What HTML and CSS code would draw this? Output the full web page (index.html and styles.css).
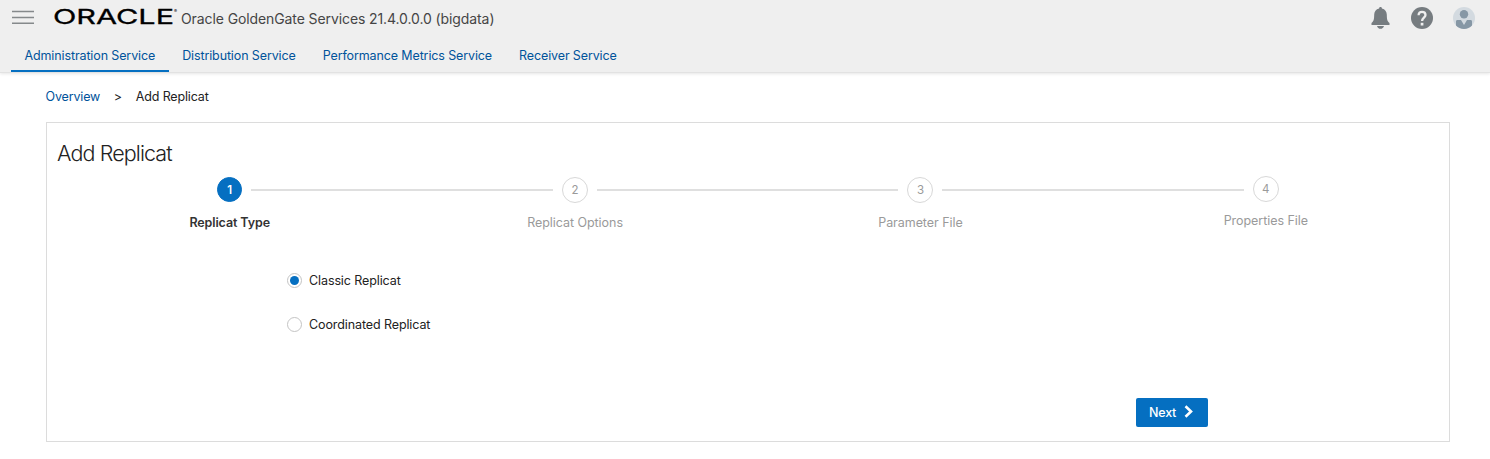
FILE: index.html
```html
<!DOCTYPE html>
<html lang="en">
<head>
<meta charset="utf-8">
<title>Add Replicat</title>
<link rel="stylesheet" href="styles.css">
</head>
<body>
<header class="header">
  <div class="brand-row">
    <svg class="menu" width="22" height="14" viewBox="0 0 22 14"><path d="M0 1.5h22M0 7.5h22M0 13.2h22" stroke="#85898b" stroke-width="1.5"/></svg>
    <svg class="logo" width="124" height="22" viewBox="0 0 124 22" role="img" aria-label="ORACLE">
      <text x="-1" y="17.8" class="wordmark" textLength="121" lengthAdjust="spacingAndGlyphs">ORACLE</text>
      <text x="120" y="7" class="reg">®</text>
    </svg>
    <span class="product">Oracle GoldenGate Services 21.4.0.0.0 (bigdata)</span>
    <div class="tools">
      <svg width="20" height="22" viewBox="0 0 20 22" fill="#767c80"><path d="M9.500 0c.9 0 1.400.6 1.400 1.400C14.100 2 15.700 4.500 15.800 7.500c.1 4.500.3 6.500 2.700 8.600V18H.5v-1.900c2.400-2.100 2.600-4.100 2.700-8.600C3.300 4.500 4.900 2 8.100 1.400 8.100.6 8.600 0 9.500 0zM6 19h7c-.5 1.900-1.800 2.800-3.500 2.800S6.500 20.900 6 19z"/></svg>
      <svg width="22" height="22" viewBox="0 0 22 22"><circle cx="11" cy="11" r="11" fill="#767c80"/><path d="M7.600 8.200C7.600 5.900 9 4.800 11 4.800s3.500 1.200 3.500 3.100c0 2.600-3.400 2.900-3.400 6.100" fill="none" stroke="#efefef" stroke-width="2.300"/><rect x="9.700" y="15.800" width="2.700" height="2.700" fill="#efefef"/></svg>
      <svg width="22" height="22" viewBox="0 0 22 22"><circle cx="11" cy="11" r="11" fill="#d3dae0"/><circle cx="11" cy="7.300" r="4.200" fill="#8697a5"/><path d="M3 14.500c0-1 .6-1.500 1.500-1.500H8l3 5 3-5h3.500c.9 0 1.500.5 1.500 1.500v4A11 11 0 0 1 3 18.500z" fill="#8697a5"/></svg>
    </div>
  </div>
  <nav class="tabs">
    <a class="tab active">Administration Service</a>
    <a class="tab">Distribution Service</a>
    <a class="tab">Performance Metrics Service</a>
    <a class="tab">Receiver Service</a>
  </nav>
</header>
<div class="crumbs"><a>Overview</a><span class="sep">&gt;</span><span>Add Replicat</span></div>
<main class="panel">
  <h1>Add Replicat</h1>
  <div class="train">
    <div class="step current"><div class="track"><i></i><b>1</b><i class="line"></i></div><span>Replicat Type</span></div>
    <div class="step"><div class="track"><i class="line"></i><b>2</b><i class="line"></i></div><span>Replicat Options</span></div>
    <div class="step"><div class="track"><i class="line"></i><b>3</b><i class="line"></i></div><span>Parameter File</span></div>
    <div class="step last"><div class="track"><i class="line"></i><b>4</b><i></i></div><span>Properties File</span></div>
  </div>
  <div class="options">
    <label class="option"><span class="radio checked"></span>Classic Replicat</label>
    <label class="option"><span class="radio"></span>Coordinated Replicat</label>
  </div>
  <button class="next"><span>Next</span><svg width="10" height="13" viewBox="0 0 10 13"><path d="M1.500 1.300L7 6.500l-5.500 5.200" fill="none" stroke="#fff" stroke-width="2.600"/></svg></button>
</main>
</body>
</html>
```
FILE: styles.css
```css
* { box-sizing: border-box; }
body { margin: 0; height: 459px; overflow: hidden; background: #fff; color: #222; font: 12.5px/20px Inter, "Liberation Sans", sans-serif; letter-spacing: -.05px; }
.header { height: 73px; background: #efefef; border-bottom: 1px solid #e2e2e2; box-shadow: 0 1px 3px rgba(0,0,0,.1); }
.brand-row { display: flex; height: 38px; padding: 0 15px 0 12px; }
.menu { margin-top: 10px; }
.logo { margin: 6px 0 0 20px; overflow: visible; }
.wordmark { font-family: Inter, sans-serif; font-size: 20.5px; letter-spacing: 0; fill: #000; stroke: #000; stroke-width: .3px; }
.reg { font-size: 4.5px; fill: #000; }
.product { margin: 9px 0 0 3px; color: #454545; font-size: 14px; letter-spacing: -.1px; white-space: nowrap; }
.tools { display: flex; gap: 20px; margin: 7px 0 0 auto; }
.tabs { display: flex; height: 34px; padding-left: 11px; letter-spacing: -.12px; }
.tab { height: 34px; padding: 8px 13.5px 0; color: #00539b; white-space: nowrap; }
.tab.active { border-bottom: 2px solid #056fc1; }
.crumbs { display: flex; height: 49px; padding: 14px 0 0 45.5px; letter-spacing: -.15px; }
.crumbs a { color: #00539b; }
.sep { margin: 0 14px 0 13.5px; }
.panel { width: 1404px; height: 320px; margin-left: 46px; border: 1px solid #dcdcdc; }
h1 { height: 54px; margin: 0; padding: 16px 0 0 10px; font-size: 21.5px; font-weight: 300; line-height: 28px; letter-spacing: -.9px; }
.train { display: flex; width: 1381.5px; margin-left: 10px; }
.step { flex: 1; height: 64px; text-align: center; color: #9a9a9a; }
.track { display: flex; align-items: center; height: 25px; gap: 9px; }
.track i { flex: 1; height: 2px; }
.track .line { background: #dfdfdf; }
.track b { width: 26px; height: 26px; border: 1px solid #d8d8d8; border-radius: 50%; font-size: 11.5px; font-weight: 400; line-height: 24px; }
.step > span { display: block; margin-top: 11px; }
.step.current { color: #333; font-weight: 600; letter-spacing: -.1px; }
.current .track b { width: 25px; height: 25px; background: #056fc1; border-color: #056fc1; color: #fff; font-weight: 600; }
.last b { transform: translateY(-1px); }
.last > span { transform: translateY(-2px); }
.options { display: flex; flex-direction: column; gap: 24px; padding: 30px 0 0 240px; }
.option { display: flex; align-items: center; height: 20px; letter-spacing: -.1px; }
.radio { display: grid; place-items: center; width: 15px; height: 15px; margin: 0 7px 1px 0; border: 1px solid #c4c4c4; border-radius: 50%; }
.checked::after { content: ""; width: 9px; height: 9px; border-radius: 50%; background: #056fc1; }
.next { display: flex; align-items: center; gap: 8px; width: 72px; height: 29px; margin: 63px 0 0 1089px; padding: 0 0 0 13px; border: 0; border-radius: 2px; background: #056fc1; color: #fff; font: 500 12.5px/20px Inter, sans-serif; letter-spacing: -.2px; }
.next svg { margin-bottom: 2px; }
```
